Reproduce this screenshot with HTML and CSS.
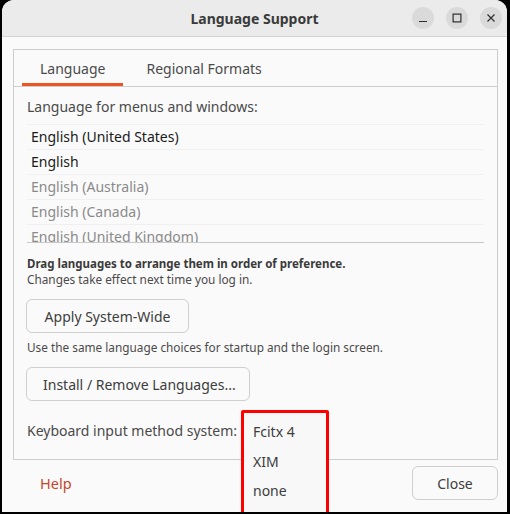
FILE: index.html
```html
<!DOCTYPE html>
<html lang="en">
<head>
  <meta charset="UTF-8" />
  <title>Language Support</title>
  <link rel="stylesheet" href="styles.css">
</head>
<body>

  <div class="window">
    <div class="titlebar">
      <div></div>
      <div class="title">Language Support</div>
      <div class="controls">
        <span class="ctl">
          <svg width="10" height="10" viewBox="0 0 10 10"><path d="M1 8.5h8" stroke="#2e2e2e" stroke-width="1.2" fill="none"/></svg>
        </span>
        <span class="ctl">
          <svg width="10" height="10" viewBox="0 0 10 10"><rect x="1.1" y="1.1" width="7.8" height="7.8" stroke="#2e2e2e" stroke-width="1.2" fill="none"/></svg>
        </span>
        <span class="ctl">
          <svg width="10" height="10" viewBox="0 0 10 10"><path d="M1.5 1.5l7 7M8.5 1.5l-7 7" stroke="#2e2e2e" stroke-width="1.2" fill="none"/></svg>
        </span>
      </div>
    </div>

    <div class="content">
      <div class="frame">
        <div class="tabs">
          <div class="tab active">Language</div>
          <div class="tab">Regional Formats</div>
        </div>

        <div class="page">
          <div class="label">Language for menus and windows:</div>
          <div class="lang-list">
            <div class="lang">English (United States)</div>
            <div class="lang">English</div>
            <div class="lang off">English (Australia)</div>
            <div class="lang off">English (Canada)</div>
            <div class="lang off">English (United Kingdom)</div>
          </div>

          <div class="hint-bold">Drag languages to arrange them in order of preference.</div>
          <div class="hint">Changes take effect next time you log in.</div>

          <button class="btn btn-apply">Apply System-Wide</button>
          <div class="hint hint-apply">Use the same language choices for startup and the login screen.</div>

          <button class="btn btn-install">Install / Remove Languages...</button>

          <div class="label keyboard">Keyboard input method system:</div>
        </div>
      </div>

      <div class="footer">
        <span class="help">Help</span>
        <button class="btn btn-close">Close</button>
      </div>
    </div>

    <!-- açılır menü -->
    <div class="popup">
      <div class="item">Fcitx 4</div>
      <div class="item">XIM</div>
      <div class="item">none</div>
    </div>
  </div>

</body>
</html>
```

FILE: styles.css
```css
html, body {
  margin: 0;
  padding: 0;
  background: #000;
}

body {
  width: 510px;
  height: 514px;
  overflow: hidden;
  font-family: "Noto Sans", sans-serif;
  font-size: 14px;
  color: #3d3d3d;
}

.window {
  position: relative;
  margin-left: 2px;
  width: 505px;
  height: 512px;
  background: #fafafa;
  border-radius: 12px 12px 0 0;
  overflow: hidden;
}

.titlebar {
  display: grid;
  grid-template-columns: 1fr auto 1fr;
  align-items: center;
  height: 36px;
  background: #ebebeb;
  border-bottom: 1px solid #d3d3d3;
}

.title {
  font-weight: bold;
  font-size: 14px;
  color: #3a3a3a;
}

.controls {
  display: flex;
  justify-content: flex-end;
  gap: 12px;
  padding-right: 5px;
}

.ctl {
  display: flex;
  align-items: center;
  justify-content: center;
  width: 22px;
  height: 22px;
  border-radius: 50%;
  background: #dadada;
}

.content {
  padding: 12px 9px 0 11px;
}

.frame {
  height: 409px;
  border: 1px solid #cdcdcd;
}

.tabs {
  display: flex;
  height: 36px;
  border-bottom: 1px solid #cdcdcd;
  padding-left: 8px;
}

.tab {
  padding: 1px 18px 0;
  line-height: 35px;
  font-size: 14px;
  color: #4a4a4a;
  margin-right: 5px;
}

.tab.active {
  box-shadow: inset 0 -3px 0 #e95420;
}

.page {
  padding: 10px 13px 0 13px;
}

.label {
  line-height: 20px;
  color: #4a4a4a;
}

.lang-list {
  margin-top: 7px;
  border-top: 1px solid #f0f0f0;
  border-bottom: 1px solid #c8c8c8;
  height: 117px;
  overflow: hidden;
}

.lang {
  height: 24px;
  line-height: 24px;
  padding-left: 4px;
  border-bottom: 1px solid #f0f0f0;
  color: #1a1a1a;
}

.lang.off {
  color: #8a8a8a;
}

.hint-bold {
  margin-top: 13px;
  font-size: 11.5px;
  font-weight: bold;
  line-height: 16px;
  color: #3a3a3a;
}

.hint {
  font-size: 11.8px;
  line-height: 15px;
  color: #4a4a4a;
}

.btn {
  display: block;
  font-family: inherit;
  font-size: 14px;
  color: #3d3d3d;
  background: #fafafa;
  border: 1px solid #cfcfcf;
  border-radius: 6px;
  height: 34px;
  padding: 0 16px;
  white-space: nowrap;
}

.btn-apply {
  margin: 12px 0 0 -1px;
  width: 163px;
}

.hint-apply {
  margin-top: 7px;
}

.btn-install {
  margin: 12px 0 0 -1px;
  width: 224px;
}

.keyboard {
  margin-top: 20px;
}

.footer {
  display: flex;
  justify-content: space-between;
  align-items: center;
  padding: 6px 0 0 27px;
}

.help {
  color: #c7462a;
  font-size: 14.5px;
}

.btn-close {
  width: 86px;
}

.popup {
  position: absolute;
  left: 239px;
  top: 410px;
  width: 82px;
  height: 104px;
  border: 3px solid #ff0000;
  border-radius: 2px;
  background: #f8f8f8;
}

.item {
  height: 29.5px;
  line-height: 29.5px;
  padding-left: 9px;
  font-size: 14px;
  color: #3d3d3d;
}

.item:first-child {
  margin-top: 4px;
}
```
